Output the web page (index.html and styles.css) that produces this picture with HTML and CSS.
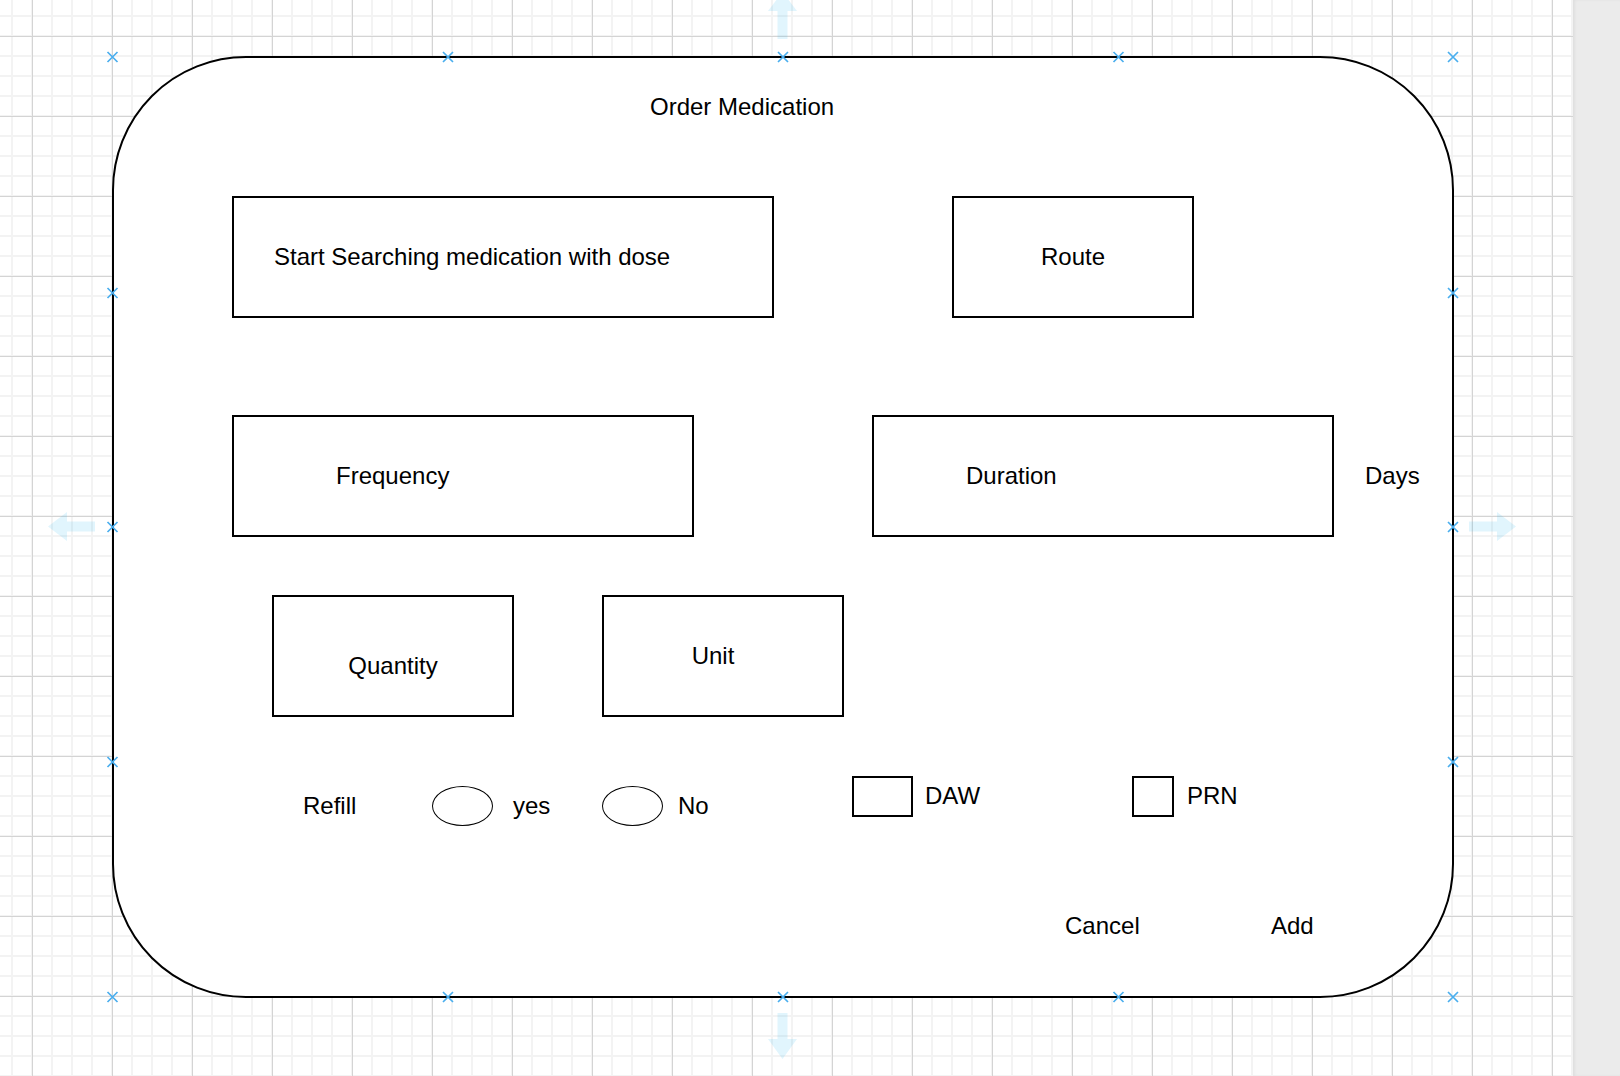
FILE: index.html
```html
<!DOCTYPE html>
<html lang="en">
<head>
  <meta charset="UTF-8">
  <meta name="viewport" content="width=device-width, initial-scale=1.0">
  <title>Order Medication</title>
  <link rel="stylesheet" href="styles.css">
</head>
<body>
  <div class="editor">
    <div class="canvas">
      <div class="form">
        <div class="title">Order Medication</div>
        <div class="row row-1">
          <div class="field field-search">Start Searching medication with dose</div>
          <div class="field field-route">Route</div>
        </div>
        <div class="row row-2">
          <div class="field field-freq">Frequency</div>
          <div class="field field-duration">Duration</div>
          <span class="days">Days</span>
        </div>
        <div class="row row-3">
          <div class="field field-qty">Quantity</div>
          <div class="field field-unit">Unit</div>
        </div>
        <div class="row row-4">
          <div class="radio-group">
            <span class="lbl lbl-refill">Refill</span>
            <i class="radio radio-yes"></i>
            <span class="lbl lbl-yes">yes</span>
            <i class="radio radio-no"></i>
            <span class="lbl lbl-no">No</span>
          </div>
          <div class="check-group">
            <i class="check check-daw"></i>
            <span class="lbl lbl-daw">DAW</span>
            <i class="check check-prn"></i>
            <span class="lbl">PRN</span>
          </div>
        </div>
        <div class="row row-5">
          <span class="btn btn-cancel">Cancel</span>
          <span class="btn">Add</span>
        </div>
      </div>

      <!-- selection handles -->
      <svg class="handles" width="1573" height="1076" viewBox="0 0 1573 1076">
        <g class="arrows">
          <polygon points="777.5,39 787.5,39 787.5,11 797,11 782.5,-8 768,11 777.5,11"/>
          <polygon points="777.5,1013 787.5,1013 787.5,1039 797,1039 782.5,1059 768,1039 777.5,1039"/>
          <polygon points="95,521.5 95,531.5 67,531.5 67,541 48,526.5 67,512 67,521.5"/>
          <polygon points="1469,521.5 1469,531.5 1497,531.5 1497,541 1516,526.5 1497,512 1497,521.5"/>
        </g>
        <g class="marks">
          <path d="M107.5 52l10 10M117.5 52l-10 10"/>
          <path d="M443 52l10 10M453 52l-10 10"/>
          <path d="M778 52l10 10M788 52l-10 10"/>
          <path d="M1113.5 52l10 10M1123.5 52l-10 10"/>
          <path d="M1448 52l10 10M1458 52l-10 10"/>
          <path d="M107.5 288l10 10M117.5 288l-10 10"/>
          <path d="M1448 288l10 10M1458 288l-10 10"/>
          <path d="M107.5 522l10 10M117.5 522l-10 10"/>
          <path d="M1448 522l10 10M1458 522l-10 10"/>
          <path d="M107.5 757l10 10M117.5 757l-10 10"/>
          <path d="M1448 757l10 10M1458 757l-10 10"/>
          <path d="M107.5 992l10 10M117.5 992l-10 10"/>
          <path d="M443 992l10 10M453 992l-10 10"/>
          <path d="M778 992l10 10M788 992l-10 10"/>
          <path d="M1113.5 992l10 10M1123.5 992l-10 10"/>
          <path d="M1448 992l10 10M1458 992l-10 10"/>
        </g>
      </svg>
    </div>
    <div class="sidebar"></div>
  </div>
</body>
</html>
```

FILE: styles.css
```css
html,body,div,span,i{margin:0;padding:0;}
body{
  font-family: "Liberation Sans", Arial, sans-serif;
  font-size: 24px;
  color: #000;
  background: #fff;
  overflow: hidden;
}
.editor{
  display: flex;
  width: 1620px;
  height: 1076px;
}
.canvas{
  position: relative;
  width: 1573px;
  height: 1076px;
  flex: none;
  box-sizing: border-box;
  padding: 56px 0 0 112px;
  overflow: hidden;
  background-color: #fff;
  background-image:
    linear-gradient(to right, #d4d4d4 1px, transparent 1px),
    linear-gradient(to bottom, #d4d4d4 1px, transparent 1px),
    linear-gradient(to right, #f3f3f3 2px, transparent 2px),
    linear-gradient(to bottom, #f3f3f3 2px, transparent 2px);
  background-size: 80px 80px, 80px 80px, 20px 20px, 20px 20px;
  background-position: 32px 0, 0 36px, 11px 0, 0 15px;
}
.sidebar{
  flex: 1;
  background: #ebebeb;
  box-shadow: inset 2px 0 3px rgba(0,0,0,0.05);
}

/* form shape */
.form{
  width: 1342px;
  height: 942px;
  box-sizing: border-box;
  border: 2px solid #000;
  border-radius: 134px;
  background: #fff;
}
.title{
  margin-top: 29px;
  padding-left: 536px;
  line-height: 40px;
  height: 40px;
}
.row{
  display: flex;
  align-items: flex-start;
}
.row-1{ margin-top: 69px; }
.row-2{ margin-top: 97px; }
.row-3{ margin-top: 58px; }
.row-4{ margin-top: 59px; padding-left: 189px; }
.row-5{ margin-top: 80px; padding-left: 951px; }

.field{
  flex: none;
  height: 122px;
  line-height: 118px;
  box-sizing: border-box;
  border: 2px solid #000;
  white-space: nowrap;
}
.field-search{
  margin-left: 118px;
  width: 542px;
  padding-left: 40px;
}
.field-route{
  margin-left: 178px;
  width: 242px;
  text-align: center;
}
.field-freq{
  margin-left: 118px;
  width: 462px;
  padding-left: 102px;
}
.field-duration{
  margin-left: 178px;
  width: 462px;
  padding-left: 92px;
}
.days{
  margin-left: 31px;
  line-height: 122px;
}
.field-qty{
  margin-left: 158px;
  width: 242px;
  padding-top: 20px;
  line-height: 98px;
  text-align: center;
}
.field-unit{
  margin-left: 88px;
  width: 242px;
  padding-right: 20px;
  text-align: center;
}

/* refill / flags */
.radio-group,
.check-group{
  display: flex;
  align-items: center;
  height: 40px;
  line-height: 40px;
}
.radio-group{ margin-top: 10px; }
.lbl{ display: block; white-space: nowrap; }
.lbl-refill{ width: 129px; }
.lbl-yes{ width: 89px; }
.lbl-no{ width: 174px; }
.lbl-daw{ width: 207px; }
.radio{
  display: block;
  width: 61px;
  height: 40px;
  box-sizing: border-box;
  border: 1.5px solid #000;
  border-radius: 50%;
}
.radio-yes{ margin-right: 20px; }
.radio-no{ margin-right: 15px; }
.check{
  display: block;
  height: 41px;
  box-sizing: border-box;
  border: 2px solid #000;
}
.check-daw{ width: 61px; margin-right: 12px; }
.check-prn{ width: 42px; margin-right: 13px; }

.btn{
  display: block;
  line-height: 40px;
}
.btn-cancel{ width: 206px; }

/* overlay handles */
.handles{
  position: absolute;
  top: 0;
  left: 0;
  pointer-events: none;
}
.arrows polygon{
  fill: rgba(41,182,242,0.14);
}
.marks path{
  fill: none;
  stroke: #4aaeee;
  stroke-width: 1.7;
}
```
